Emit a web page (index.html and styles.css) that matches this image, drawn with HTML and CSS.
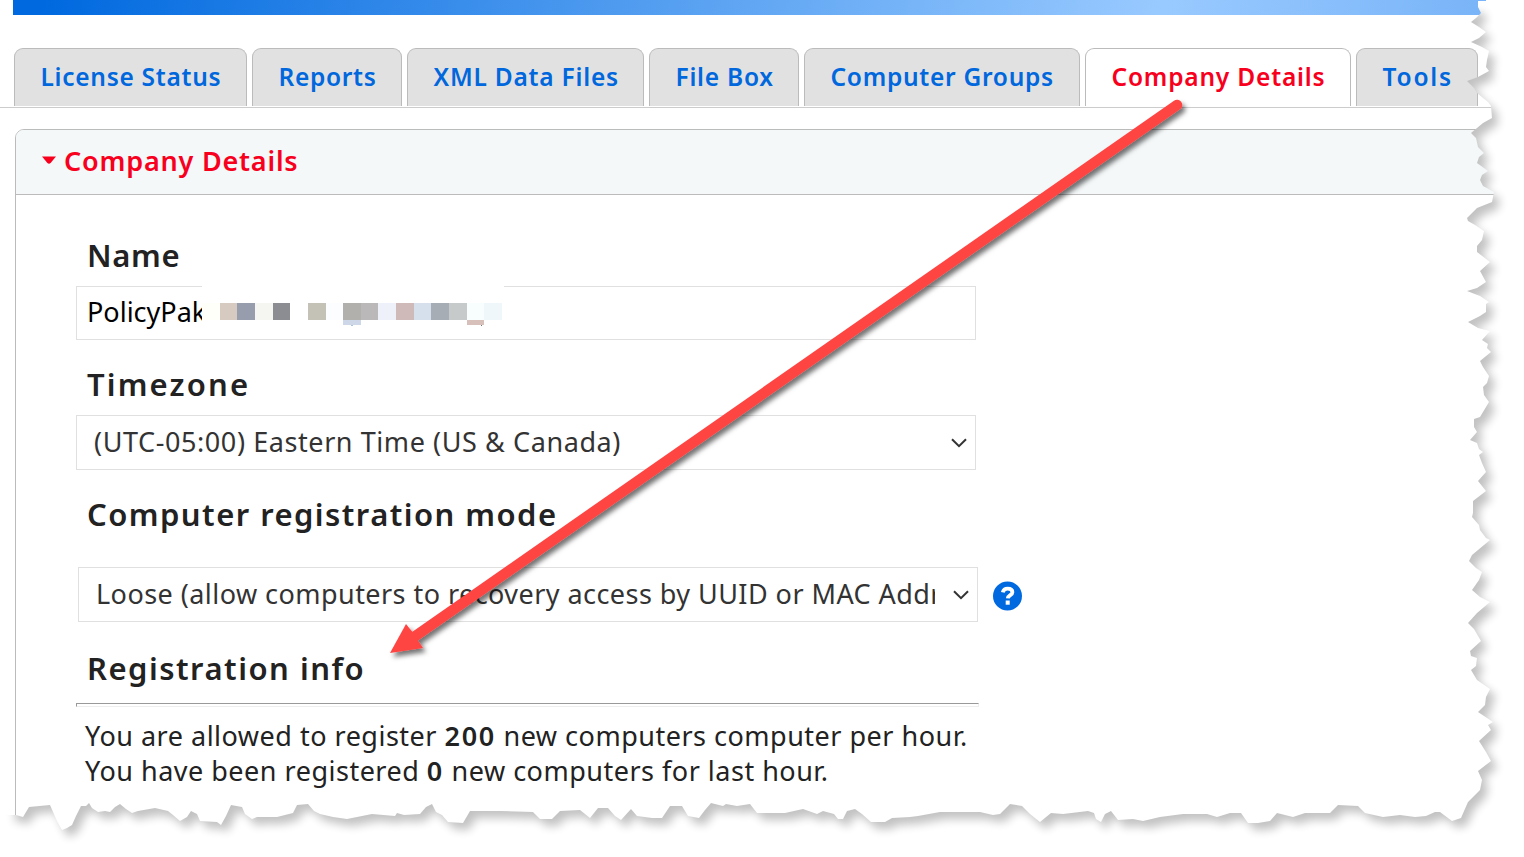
FILE: index.html
```html
<!DOCTYPE html>
<html lang="en">
<head>
<meta charset="utf-8">
<title>Company Details</title>
<link rel="stylesheet" href="styles.css">
</head>
<body>
<div class="page">
  <div class="banner"></div>
  <nav class="tabs">
    <a class="tab t1">License Status</a>
    <a class="tab t2">Reports</a>
    <a class="tab t3">XML Data Files</a>
    <a class="tab t4">File Box</a>
    <a class="tab t5">Computer Groups</a>
    <a class="tab t6 active">Company Details</a>
    <a class="tab t7">Tools</a>
  </nav>
  <section class="panel">
    <header class="panel-head">
      <svg class="caret" width="14" height="9" viewBox="0 0 14 9"><path d="M0 .6H14L8.6 7Q7 8.6 5.4 7Z" fill="#f8001d"/></svg>
      <h2>Company Details</h2>
    </header>
    <div class="panel-body">
      <h3 class="l-name">Name</h3>
      <div class="field name-field">
        <span class="name-value">PolicyPak</span>
        <svg class="redaction" width="302" height="45" viewBox="0 0 302 45" shape-rendering="crispEdges">
          <rect width="302" height="45" fill="#fff"/>
          <rect x="0" y="18" width="18" height="17" fill="#fffffa"/>
          <rect x="18" y="18" width="17" height="17" fill="#d7cbc1"/>
          <rect x="35" y="18" width="18" height="17" fill="#989dae"/>
          <rect x="53" y="18" width="18" height="17" fill="#f5f5f1"/>
          <rect x="71" y="18" width="17" height="17" fill="#8c8c93"/>
          <rect x="106" y="18" width="18" height="17" fill="#c4c2b6"/>
          <rect x="124" y="18" width="17" height="17" fill="#fcfdff"/>
          <rect x="141" y="18" width="18" height="17" fill="#b1b0ac"/>
          <rect x="159" y="18" width="17" height="17" fill="#bab8b9"/>
          <rect x="176" y="18" width="18" height="17" fill="#eef1f9"/>
          <rect x="194" y="18" width="18" height="17" fill="#cfbab9"/>
          <rect x="212" y="18" width="17" height="17" fill="#d6e0ec"/>
          <rect x="229" y="18" width="18" height="17" fill="#a6adb5"/>
          <rect x="247" y="18" width="18" height="17" fill="#c6cacb"/>
          <rect x="265" y="18" width="17" height="17" fill="#f8fefe"/>
          <rect x="282" y="18" width="18" height="17" fill="#eff7fa"/>
          <rect x="141" y="35" width="18" height="5" fill="#cdd7e7"/>
          <rect x="265" y="35" width="17" height="5" fill="#d7c0b9"/>
          <rect x="149" y="40" width="2" height="1" fill="#a9c7dc"/>
          <rect x="279" y="40" width="1" height="1" fill="#777"/>
        </svg>
      </div>
      <h3 class="l-zone">Timezone</h3>
      <div class="field select zone-field">
        <span class="value">(UTC-05:00) Eastern Time (US &amp; Canada)</span>
        <svg class="chev" width="16" height="10" viewBox="0 0 16 10"><path d="M1 1.2L8 8.2L15 1.2" fill="none" stroke="#333" stroke-width="2"/></svg>
      </div>
      <h3 class="l-mode">Computer registration mode</h3>
      <div class="mode-row">
        <div class="field select mode-field">
          <span class="value loose">Loose (allow computers to recovery access by UUID or MAC Address)</span>
          <svg class="chev" width="16" height="10" viewBox="0 0 16 10"><path d="M1 1.2L8 8.2L15 1.2" fill="none" stroke="#333" stroke-width="2"/></svg>
        </div>
        <svg class="help" width="30" height="30" viewBox="0 0 30 30"><circle cx="14.5" cy="15" r="14.5" fill="#0069e0"/><path d="M9.8 11.3C10.4 8.6 12.2 7.6 14.7 7.6C17.4 7.6 19.4 8.9 19.4 11.2C19.4 14.2 15.1 14 14.8 17.4" fill="none" stroke="#fff" stroke-width="3.8"/><rect x="12.7" y="19.5" width="4" height="4.2" fill="#fff"/></svg>
      </div>
      <h3 class="l-info">Registration info</h3>
      <div class="rule"></div>
      <p class="info"><span class="a">You are allowed to register</span> <b>200</b> <span class="b">new computers computer per hour.</span></p>
      <p class="info"><span class="a">You have been registered</span> <b>0</b> <span class="b">new computers for last hour.</span></p>
    </div>
  </section>
  <svg class="overlay" width="1524" height="857" viewBox="0 0 1524 857">
    <defs>
      <g id="outside">
        <path d="M1524 0H1486V1H1478L1478 7L1481 13L1476 18L1471 22L1479 27L1486 32L1479 38L1471 42L1482 47L1489 51L1487 60L1486 67L1489 71L1478 77L1467 81L1474 88L1477 93L1488 102L1491 106L1492 118L1483 123L1471 133L1476 138L1478 147L1484 153L1479 157L1477 163L1488 171L1482 175L1480 180L1483 186L1494 192L1492 202L1477 208L1467 218L1468 221L1475 225L1484 231L1482 240L1477 246L1477 252L1490 262L1480 271L1486 282L1477 288L1467 291L1480 296L1489 302L1486 304V312L1480 316L1468 322L1478 328L1490 331L1482 340L1488 344L1487 348L1491 352L1480 361L1483 367L1489 376L1487 383L1483 387L1484 395L1489 402L1483 412L1480 417L1474 419V427L1477 432L1470 440L1477 443L1479 449L1483 452L1479 455L1482 463L1486 472L1478 481L1486 491L1473 501V513L1472 517L1479 525L1480 530L1486 538L1490 540L1472 555L1469 561L1476 568L1482 572L1479 580L1472 590L1480 597L1490 602L1477 613L1468 623L1474 629L1481 641L1470 651L1471 656L1477 658L1476 666L1471 670L1477 680L1490 689L1486 697L1485 705L1478 712L1493 722L1488 725L1491 730L1479 741L1486 752L1491 761L1478 771L1482 780L1480 790L1468 802L1461 818V857H1524Z"/>
        <path d="M0 857V815H10L16 815L23 817L29 807L50 805L57 821L62 830L67 828L72 825L76 816L81 806H86L89 803L92 808L98 812L105 811L110 812L115 807L120 804L126 809L132 813L138 811L155 808L168 811L173 815L180 821L187 817L191 811L197 814L200 821L217 822L221 825L226 816L231 805L242 807L245 814L252 819L257 817L277 817L293 813L297 805L308 804L314 811L320 814L333 817L347 819L372 814L395 816L397 813L404 815L420 814L426 807L432 804L436 812L442 815L448 822L463 823L470 811L500 811L533 812L540 819H552L560 811L580 810L590 818L598 808L608 808L615 816L621 820L631 809L637 816L652 818H662L670 806H682L688 816L699 818L705 810L711 803L723 806L726 804L737 806L750 804L757 813L785 813L803 809L817 814L823 811L834 814L838 819H843L847 811L855 809L862 814L871 822H885L892 818L910 817L918 816L940 812H980L993 815L1000 814L1010 804L1022 806L1030 814L1040 822L1051 813L1063 814L1088 811L1094 813L1096 819L1101 822L1105 814L1111 811L1118 820L1133 819L1143 821L1160 817L1183 814L1207 814L1217 817L1230 813H1241L1248 823H1258L1270 821L1277 813L1293 817L1305 813L1330 813L1338 805L1358 806L1365 813L1383 817L1400 815L1415 817L1426 816L1435 812H1440L1452 821L1461 818V857Z"/>
      </g>
      <mask id="inside-mask" maskUnits="userSpaceOnUse" x="0" y="0" width="1524" height="857"><rect width="1524" height="857" fill="#fff"/><use href="#outside" fill="#000"/></mask>
      <mask id="outside-mask" maskUnits="userSpaceOnUse" x="0" y="0" width="1524" height="857"><use href="#outside" fill="#fff"/></mask>
      <filter id="soft" filterUnits="userSpaceOnUse" x="-20" y="-30" width="1560" height="910"><feGaussianBlur stdDeviation="4.6"/></filter>
      <filter id="arrow-shadow" filterUnits="userSpaceOnUse" x="370" y="80" width="840" height="610"><feDropShadow dx="3" dy="4" stdDeviation="2.5" flood-color="#000" flood-opacity=".55"/></filter>
    </defs>
    <g filter="url(#arrow-shadow)" fill="#ff4443">
      <path d="M1177 105L414 637" stroke="#ff4443" stroke-width="10.5" stroke-linecap="round"/>
      <path d="M390 653L406 624L412 631.5L418 640.5L423 648Z"/>
    </g>
    <use href="#outside" fill="#fff"/>
    <g mask="url(#outside-mask)">
      <g filter="url(#soft)" transform="translate(6 7)" opacity=".24">
        <g mask="url(#inside-mask)"><rect x="9" y="6" width="1515" height="851"/></g>
      </g>
    </g>
  </svg>
</div>
</body>
</html>
```
FILE: styles.css
```css
* { box-sizing: border-box; }
body { margin: 0; background: #fff; overflow: hidden; }
.page { position: relative; width: 1524px; height: 857px; overflow: hidden; background: #fff; color: #222; font-family: "Noto Sans", "Open Sans", sans-serif; }
.banner { height: 15px; margin: 0 38px 0 13px; background: linear-gradient(100deg, #0069df 2%, #99caff 78%, #79b4f8 100%); }
.tabs { display: flex; gap: 5px; height: 60px; margin-top: 33px; padding: 0 14px 1px; border-bottom: 1px solid #ccc; }
.tab { flex: none; height: 58px; border: 1px solid #bbb; border-bottom: 0; border-radius: 9px 9px 0 0; background: #e1e1e1; color: #0067dd; font-size: 24.5px; font-weight: 580; line-height: 56px; padding-left: 25.5px; white-space: nowrap; }
.t1 { width: 233px; letter-spacing: .72px; }
.t2 { width: 150px; letter-spacing: .68px; }
.t3 { width: 237px; letter-spacing: .78px; }
.t4 { width: 150px; letter-spacing: .75px; }
.t5 { width: 276px; letter-spacing: .72px; }
.t6 { width: 266px; letter-spacing: .8px; }
.t7 { width: 122px; letter-spacing: 1.8px; }
.tab.active { background: #fff; color: #f8001d; }
.panel { height: 740px; margin: 21px 0 0 15px; border: 1px solid #bbb; border-radius: 9px 0 0 0; overflow: hidden; }
.panel-head { display: flex; align-items: center; height: 65px; padding-left: 26px; gap: 8px; background: #f4f8f9; border-bottom: 1px solid #bbb; }
.caret { margin-top: -4px; }
h2 { margin: -2px 0 0; color: #f8001d; font-size: 27px; font-weight: 570; line-height: 64px; letter-spacing: .8px; }
.panel-body { padding-left: 60px; }
h3 { margin: 0; padding-left: 11px; height: 44px; line-height: 42px; font-size: 31px; font-weight: 640; letter-spacing: 1.5px; white-space: nowrap; }
.l-name { margin-top: 39px; letter-spacing: .7px; }
.field { position: relative; display: flex; align-items: center; width: 900px; height: 54px; border: 1px solid #e0e0e0; font-size: 27px; }
.name-field { margin-top: 8px; padding: 0 0 3px 10px; color: #000; }
.redaction { position: absolute; left: 125px; top: -2px; }
.l-zone { margin-top: 23px; letter-spacing: 2.15px; }
.zone-field { margin-top: 8px; height: 55px; }
.select { justify-content: space-between; padding: 0 8px 0 17px; }
.value { width: 842px; margin-top: -2px; overflow: hidden; white-space: nowrap; letter-spacing: .58px; color: #333; }
.loose { letter-spacing: .45px; width: 839px; }
.l-mode { margin-top: 23px; letter-spacing: 1.45px; }
.mode-row { display: flex; align-items: center; gap: 15px; margin: 30px 0 0 2px; }
.mode-field { height: 55px; }
.help { margin-top: 3px; }
.l-info { margin-top: 25px; }
.rule { width: 903px; height: 4px; margin: 12px 0 11px; border: 1px solid #eee; border-top-color: #999; border-left-color: #999; }
.info { margin: 0; padding-left: 9px; height: 35px; font-size: 27px; line-height: 35px; white-space: nowrap; letter-spacing: .5px; }
.info b { font-weight: 580; letter-spacing: 1.7px; }
.overlay { position: absolute; left: 0; top: 0; }
```
